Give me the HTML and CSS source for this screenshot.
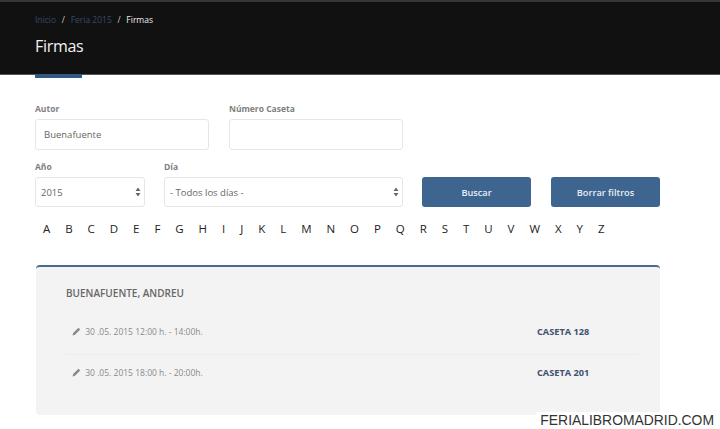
FILE: index.html
```html
<!DOCTYPE html>
<html lang="es">
<head>
    <meta charset="UTF-8">
    <meta name="viewport" content="width=device-width, initial-scale=1.0">
    <title>Firmas</title>
    <link rel="stylesheet" href="styles.css">
</head>
<body>
    <header class="page-header">
        <div class="breadcrumb">
            <a href="#">Inicio</a> <span class="sep">/</span>
            <a href="#">Feria 2015</a> <span class="sep">/</span>
            <span class="current">Firmas</span>
        </div>
        <h1>Firmas</h1>
        <div class="title-mark"></div>
    </header>

    <form class="filters">
        <div class="row row-first">
            <div class="field field-text">
                <label for="autor">Autor</label>
                <input id="autor" type="text" value="Buenafuente">
            </div>
            <div class="field field-text">
                <label for="caseta">Número Caseta</label>
                <input id="caseta" type="text">
            </div>
        </div>
        <div class="row row-second">
            <div class="field field-year">
                <label for="anio">Año</label>
                <div class="select-wrap">
                    <select id="anio"><option>2015</option></select>
                    <svg class="arrows" width="6" height="10" viewBox="0 0 6 10"><path d="M3 0.5 5.5 4H0.5zM3 9.5 0.5 6H5.5z"/></svg>
                </div>
            </div>
            <div class="field field-day">
                <label for="dia">Día</label>
                <div class="select-wrap">
                    <select id="dia"><option>- Todos los días -</option></select>
                    <svg class="arrows" width="6" height="10" viewBox="0 0 6 10"><path d="M3 0.5 5.5 4H0.5zM3 9.5 0.5 6H5.5z"/></svg>
                </div>
            </div>
            <button type="button" class="btn">Buscar</button>
            <button type="button" class="btn">Borrar filtros</button>
        </div>
    </form>

    <nav class="alphabet">
        <a href="#">A</a><a href="#">B</a><a href="#">C</a><a href="#">D</a><a href="#">E</a><a href="#">F</a><a href="#">G</a><a href="#">H</a><a href="#">I</a><a href="#">J</a><a href="#">K</a><a href="#">L</a><a href="#">M</a><a href="#">N</a><a href="#">O</a><a href="#">P</a><a href="#">Q</a><a href="#">R</a><a href="#">S</a><a href="#">T</a><a href="#">U</a><a href="#">V</a><a href="#">W</a><a href="#">X</a><a href="#">Y</a><a href="#">Z</a>
    </nav>

    <section class="panel">
        <h2>BUENAFUENTE, ANDREU</h2>
        <div class="signing">
            <span class="when">
                <svg class="pencil" width="9" height="9" viewBox="0 0 9 9"><path d="M6.4 0.8 8.2 2.6 3 7.8 0.5 8.5 1.2 6z"/></svg>
                30 .05. 2015 12:00 h. - 14:00h.
            </span>
            <a class="booth" href="#">CASETA 128</a>
        </div>
        <div class="signing">
            <span class="when">
                <svg class="pencil" width="9" height="9" viewBox="0 0 9 9"><path d="M6.4 0.8 8.2 2.6 3 7.8 0.5 8.5 1.2 6z"/></svg>
                30 .05. 2015 18:00 h. - 20:00h.
            </span>
            <a class="booth" href="#">CASETA 201</a>
        </div>
    </section>

    <div class="watermark">FERIALIBROMADRID.COM</div>
</body>
</html>
```

FILE: styles.css
```css
body {
    margin: 0;
    font-family: "Open Sans", sans-serif;
    background: #fff;
    color: #555;
    height: 429px;
    overflow: hidden;
    position: relative;
}

a {
    text-decoration: none;
}

.page-header {
    height: 72px;
    padding: 0 35px;
    background: #111;
    border-top: 2px solid #33373a;
    border-bottom: 1px solid #555;
    position: relative;
}

.breadcrumb {
    padding-top: 12px;
    font-size: 8.5px;
    line-height: 12px;
    color: #eee;
}

.breadcrumb a {
    color: #34496b;
}

.breadcrumb .sep {
    color: #ccc;
    margin: 0 3.5px;
}

.page-header h1 {
    margin: 8px 0 0;
    font-size: 16px;
    line-height: 24px;
    font-weight: 400;
    letter-spacing: -0.3px;
    color: #f2f2f2;
}

.title-mark {
    position: absolute;
    left: 35px;
    bottom: -4px;
    width: 47px;
    height: 4px;
    background: #34587f;
}

.filters {
    padding: 28px 0 0 35px;
}

.row {
    display: flex;
    gap: 19px;
}

.row-first {
    gap: 20px;
}

.row-second {
    margin-top: 11px;
}

.field label {
    display: block;
    font-size: 8.5px;
    line-height: 11px;
    font-weight: 700;
    color: #808080;
    margin-bottom: 5px;
}

.field input,
.field select {
    display: block;
    width: 100%;
    box-sizing: border-box;
    background: #fff;
    border: 1px solid #e6e6e6;
    border-radius: 3px;
    font-family: "Open Sans", sans-serif;
    color: #666;
    outline: none;
}

.field input {
    height: 31px;
    padding: 0 8px;
    font-size: 9.5px;
}

.field select {
    height: 30px;
    padding: 0 5px;
    font-size: 9.5px;
    appearance: none;
}

.field-text {
    width: 174px;
}

.field-year {
    width: 110px;
}

.field-day {
    width: 239px;
}

.select-wrap {
    position: relative;
}

.arrows {
    position: absolute;
    right: 4px;
    top: 10px;
    fill: #666;
}

.btn {
    align-self: flex-end;
    width: 109px;
    height: 30px;
    border: none;
    border-radius: 3px;
    background: #3d6590;
    color: #e8eef4;
    font-family: "Open Sans", sans-serif;
    font-size: 9.2px;
    font-weight: 600;
}

.btn + .btn {
    margin-left: 1px;
}

.alphabet {
    display: flex;
    gap: 14.95px;
    padding: 14px 0 0 43px;
    font-size: 11.5px;
    line-height: 15px;
}

.alphabet a {
    color: #222;
}

.panel {
    width: 624px;
    height: 150px;
    box-sizing: border-box;
    margin: 29px 0 0 36px;
    padding: 19px 21px 0 30px;
    background: #f3f3f3;
    border-top: 2px solid #4a6a8e;
    border-radius: 4px;
}

.panel h2 {
    margin: 0 0 16px;
    font-size: 10px;
    line-height: 14px;
    font-weight: 600;
    color: #666;
}

.signing {
    display: flex;
    height: 38px;
    padding: 10px 0 0 6px;
    box-sizing: border-box;
    font-size: 8.5px;
    line-height: 12px;
}

.signing + .signing {
    height: 41px;
    padding-top: 12px;
    border-top: 1px solid #ececec;
}

.when {
    width: 465px;
    color: #8a8a8a;
}

.pencil {
    fill: #888;
    vertical-align: -1px;
    margin-right: 2px;
}

.booth {
    font-size: 9.2px;
    font-weight: 700;
    color: #3f5270;
}

.watermark {
    position: absolute;
    right: 6px;
    bottom: 1px;
    padding: 0 0 0 4px;
    background: #fff;
    font-family: "Liberation Sans", sans-serif;
    font-size: 13.9px;
    line-height: 16px;
    color: #333;
}
```
